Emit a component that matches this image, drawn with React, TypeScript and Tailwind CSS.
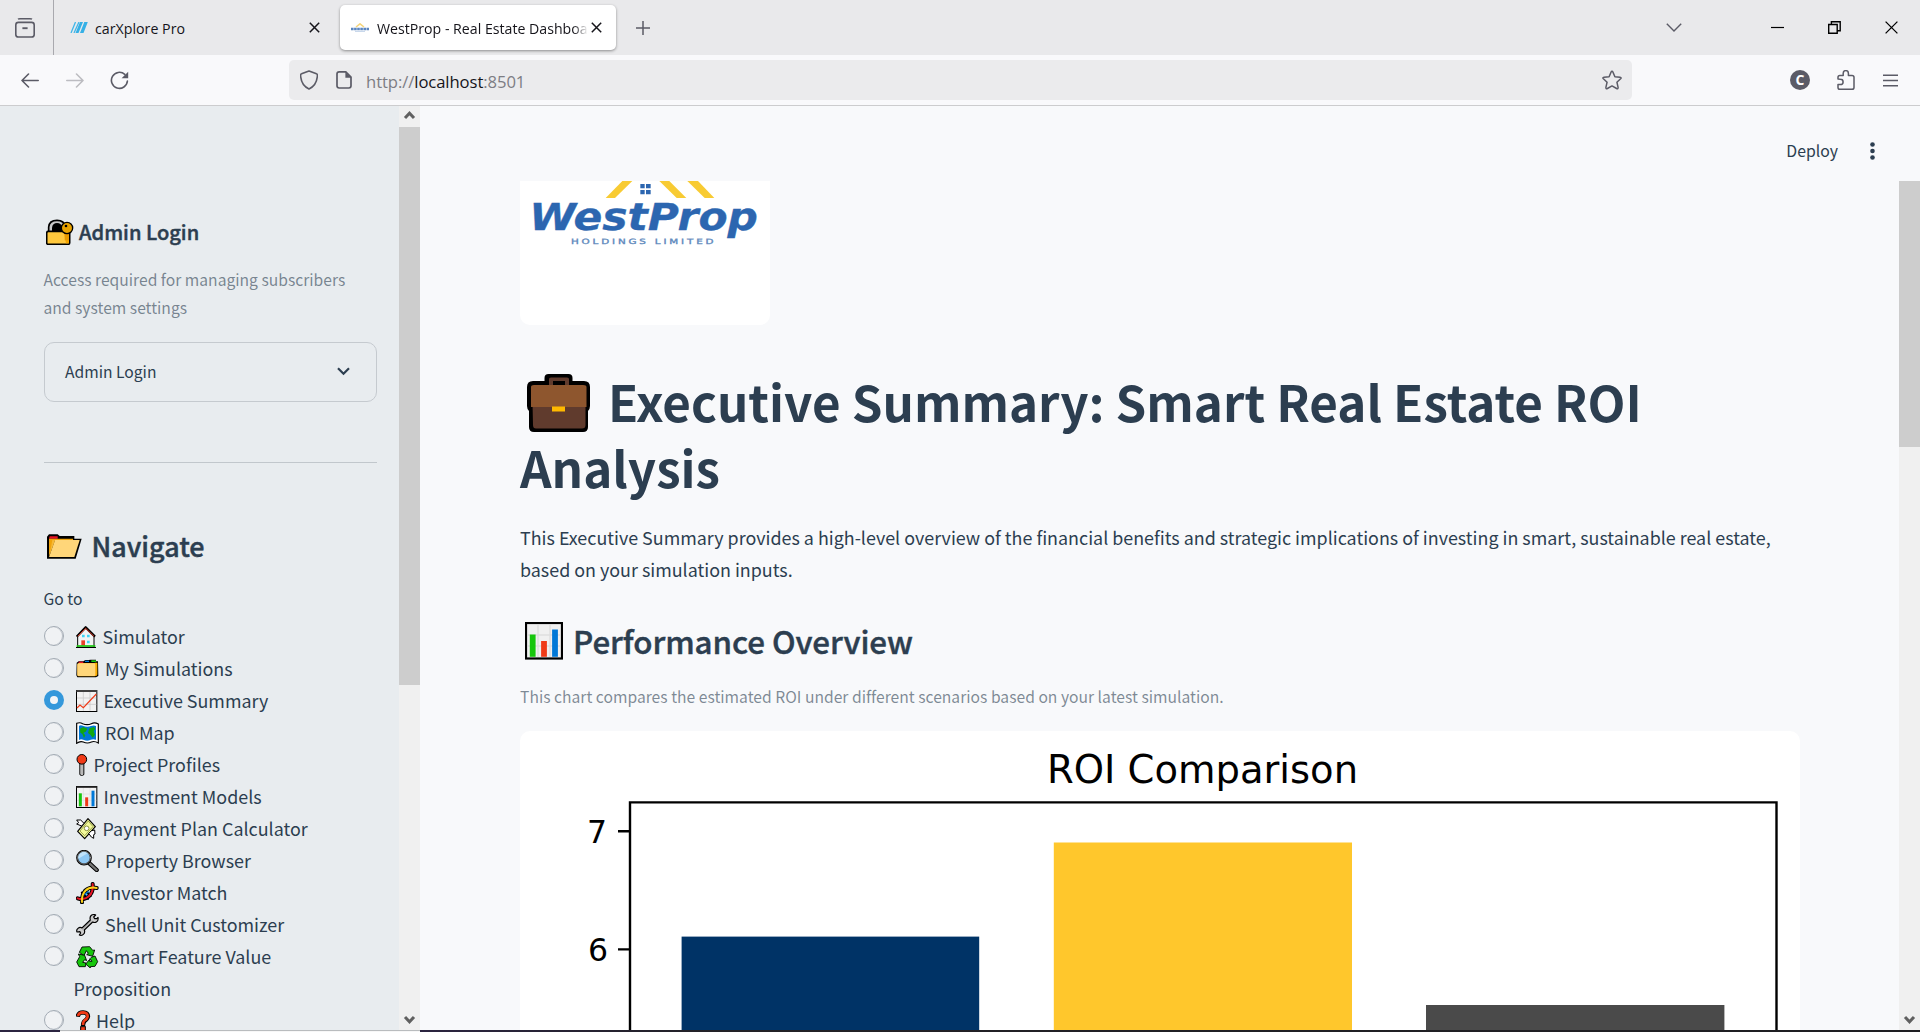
import React from "react";

const uiFont = "font-['Noto_Sans_CJK_SC',sans-serif]";
const chromeFont = "font-['Open_Sans',sans-serif]";
const semibold = "font-medium [-webkit-text-stroke:0.45px_#2c3e50]";

const icons: Record<string, React.ReactNode> = {
  house: (
    <g strokeWidth="3" strokeLinejoin="round">
      <path d="M5 64V30L29 6L54 30V64Z" fill="#f3f3f3" stroke="#000" />
      <path d="M2 32L29 4L57 32" fill="none" stroke="#000" strokeWidth="7" />
      <path d="M5 31L29 7L54 31" fill="none" stroke="#e8412a" strokeWidth="3" />
      <path d="M18 26h8v8h-8zM33 26h8v8h-8zM33 44h8v8h-8z" fill="#41d5f5" stroke="none" />
      <rect x="16" y="43" width="11" height="16" fill="#e8412a" stroke="none" />
      <path d="M2 60H58" stroke="#16c60c" strokeWidth="5" />
      <path d="M0 64.5H60" stroke="#000" strokeWidth="3" />
    </g>
  ),
  files: (
    <g>
      <path d="M2 14L8 10H22L28 6H38L44 5H60V10H66L67 54L60 58H4L1 52Z" fill="#000" />
      <path d="M56 14H64V50L60 54H56Z" fill="#ffb900" />
      <path d="M8 11h14v4H8z" fill="#e81224" />
      <path d="M27 8h12v4H27z" fill="#0078d7" />
      <path d="M46 7h14v5H46z" fill="#16c60c" />
      <path d="M4 20Q5 15 10 15H58L62 20V52Q60 55 56 55H8Q4 55 4 51Z" fill="#f7a600" />
      <path d="M4 20Q4 16 8 16L54 16Q58 16 58 20V50Q58 54 54 54H8Q4 54 4 50Z" fill="#ffd679" />
    </g>
  ),
  trend: (
    <g>
      <rect x="1.5" y="1.5" width="61" height="63" fill="#f2f2f2" stroke="#000" strokeWidth="3" />
      <path d="M1 3H63" stroke="#404040" strokeWidth="6" />
      <path d="M22 6V62M42 6V62M3 24H61M3 43H61" stroke="#ccc" strokeWidth="2.5" />
      <path d="M3 54L12 45L22 53L61 12" fill="none" stroke="#f03a17" strokeWidth="3.5" />
    </g>
  ),
  map: (
    <g>
      <path d="M2 4Q12 0 20 5Q34 11 46 5Q56 0 67 6V63Q55 56 46 60Q34 66 22 60Q12 56 2 64Z" fill="#fff" stroke="#000" strokeWidth="3.5" />
      <path d="M9 11Q15 8 22 12Q34 17 45 12Q54 9 60 12V53Q52 50 44 53Q34 59 22 53Q14 50 9 54Z" fill="#0078d7" />
      <path d="M12 20L22 15L34 20L29 29L22 33L28 40L24 48L19 36L13 32ZM40 19L54 15L58 21L53 27L57 38L50 47L43 38L36 33Z" fill="#10a810" />
    </g>
  ),
  pin: (
    <g stroke="#000" strokeWidth="3">
      <rect x="11.5" y="26" width="12" height="38" rx="4" fill="#ddd" />
      <path d="M18 30V60" stroke="#888" strokeWidth="2.5" />
      <circle cx="17.5" cy="16" r="14.5" fill="#f03a17" />
    </g>
  ),
  bars: (
    <g>
      <rect x="1.5" y="1.5" width="61" height="63" fill="#f2f2f2" stroke="#000" strokeWidth="3" />
      <path d="M1 3H63" stroke="#222" strokeWidth="5" />
      <path d="M22 6V62M42 6V62M3 24H61M3 43H61" stroke="#ddd" strokeWidth="2" />
      <path d="M13 22V61" stroke="#16c60c" strokeWidth="9" />
      <path d="M32 34V61" stroke="#f03a17" strokeWidth="9" />
      <path d="M51 14V61" stroke="#0078d7" strokeWidth="9" />
    </g>
  ),
  money: (
    <g strokeLinejoin="round">
      <path d="M36 2L58 26L26 62L5 40Z" fill="#f3fa9a" stroke="#000" strokeWidth="3.5" />
      <path d="M37 9L51 26L26 53L12 39Z" fill="none" stroke="#8a9140" strokeWidth="2.5" />
      <circle cx="32" cy="31" r="7" fill="#fff" stroke="#8a9140" strokeWidth="3" />
      <path d="M2 6H14L24 16L17 24L2 18L8 14Z" fill="#fff" stroke="#000" strokeWidth="3" />
      <path d="M56 36L57 48L53 50V61L46 57L38 46L47 38Z" fill="#fff" stroke="#000" strokeWidth="3" />
    </g>
  ),
  magnifier: (
    <g strokeLinecap="round">
      <path d="M38 38L62 60" stroke="#000" strokeWidth="13" />
      <path d="M38 38L62 60" stroke="#767676" strokeWidth="7" />
      <circle cx="24" cy="23" r="20.5" fill="#8ec8f4" stroke="#000" strokeWidth="6" />
      <circle cx="24" cy="23" r="19.5" fill="none" stroke="#aaa" strokeWidth="2" />
      <path d="M7 26A17 17 0 0 1 35 10Z" fill="#bfe2fa" />
    </g>
  ),
  dna: (
    <g fill="none" strokeLinecap="round">
      <path d="M18 32L36 50M26 24L44 42" stroke="#000" strokeWidth="7" />
      <path d="M5 49C30 58 54 38 50 6M18 61C16 30 34 12 62 18" stroke="#000" strokeWidth="12" />
      <path d="M25 32L34 43M33 25L42 34M12 52L18 55M50 12L57 17" stroke="#0078d7" strokeWidth="3" />
      <path d="M5 49C30 58 54 38 50 6" stroke="#e81224" strokeWidth="6" />
      <path d="M18 60C16 30 34 12 62 18" stroke="#fcd116" strokeWidth="6" />
      <path d="M27 38L34 31" stroke="#0078d7" strokeWidth="4" />
    </g>
  ),
  wrench: (
    <g strokeLinejoin="round">
      <path d="M47 3Q55 0 59 3L53 9L56 14L62 14L66 10Q68 20 61 24Q56 27 50 24L25 48Q28 56 22 61Q16 66 10 63L14 57L12 53L3 54Q0 48 6 43Q12 38 18 42L43 18Q40 8 47 3Z" fill="#ccc" stroke="#000" strokeWidth="3.5" />
      <path d="M20 47L47 20" stroke="#999" strokeWidth="3" />
    </g>
  ),
  recycle: (
    <g fill="#16c60c" stroke="#000" strokeWidth="2.6" strokeLinejoin="round">
      <path d="M18 3L41 2L50 13L56 12L50 31L32 26L37 22L31 14L24 29L10 19Z" />
      <path d="M7 24L26 28L32 44L26 41L20 49L30 51L28 62H9L2 48L11 32Z" />
      <path d="M46 34L57 30L65 47L57 61L43 62V66L29 54L41 40V46H48L42 38Z" />
    </g>
  ),
  question: (
    <g fill="none" strokeLinecap="butt">
      <path d="M5 20Q7 7 21 7Q36 8 36 19Q35 27 26 33Q21 37 21 48" stroke="#000" strokeWidth="13" />
      <path d="M6 18Q8 7 21 7Q35 8 35 19Q34 27 25 32Q21 36 21 45" stroke="#f03a17" strokeWidth="8" />
      <rect x="14" y="50" width="14" height="14" fill="#f03a17" stroke="#000" strokeWidth="3" />
    </g>
  ),
};

const navItems = [
  { icon: "house", width: "w-[26px]", label: "Simulator" },
  { icon: "files", width: "w-[28.5px]", label: "My Simulations" },
  { icon: "trend", width: "w-[27px]", label: "Executive Summary", selected: true },
  { icon: "map", width: "w-[28.5px]", label: "ROI Map" },
  { icon: "pin", width: "w-[17px]", label: "Project Profiles" },
  { icon: "bars", width: "w-[27px]", label: "Investment Models" },
  { icon: "money", width: "w-[26px]", label: "Payment Plan Calculator" },
  { icon: "magnifier", width: "w-[28.5px]", label: "Property Browser" },
  { icon: "dna", width: "w-[28.5px]", label: "Investor Match" },
  { icon: "wrench", width: "w-[28.5px]", label: "Shell Unit Customizer" },
  { icon: "recycle", width: "w-[26.5px]", label: "Smart Feature Value Proposition" },
  { icon: "question", width: "w-[19.5px]", label: "Help" },
];

function CloseMark() {
  return (
    <svg className="h-[11px] w-[11px] shrink-0" viewBox="0 0 11 11">
      <path d="M0.8 0.8L10.2 10.2M10.2 0.8L0.8 10.2" stroke="#15141a" strokeWidth="1.5" />
    </svg>
  );
}

function TabStrip() {
  return (
    <div className={`flex h-[55px] items-center bg-[#e9e9eb] text-[#15141a] ${chromeFont}`}>
      <div className="flex h-full w-[54px] items-center border-r border-[#a9a9ae] pl-[15px]">
        <svg className="h-5 w-5" viewBox="0 0 20 20" fill="none" stroke="#5b5b66" strokeWidth="1.6">
          <path d="M3 1.2Q3.6 0.8 5 0.8H15Q16.4 0.8 17 1.2" />
          <rect x="0.8" y="4.4" width="18.4" height="14.6" rx="2.6" />
          <path d="M7.4 10.2H12.6" strokeWidth="1.9" />
        </svg>
      </div>
      <div className="flex h-[45px] w-[286px] items-center pl-4">
        <svg className="h-[11px] w-[18px]" viewBox="0 0 18 11">
          <path d="M5.5 0L1 11M9 0L4 11" stroke="#41b6e8" strokeWidth="1.3" />
          <path d="M10 0H13L8.5 11H5.5ZM14.3 0H17.8L13.5 11H10Z" fill="#35b0e6" />
        </svg>
        <span className="ml-[7px] pt-0.5 text-[14.2px] tracking-[0.02px]">carXplore Pro</span>
        <span className="mr-[20px] ml-auto flex"><CloseMark /></span>
      </div>
      <div className="flex h-[45px] w-[276px] items-center rounded-[5px] bg-white pr-[14px] pl-[11px] shadow-[0_1px_3px_rgba(0,0,0,0.4)]">
        <svg className="h-[9px] w-[18px] shrink-0" viewBox="0 0 18 9">
          <path d="M5 4L9 0.8L13 4" fill="none" stroke="#f6d57a" strokeWidth="1.5" />
          <path d="M0 6H18" stroke="#5b86c0" strokeWidth="2.4" strokeDasharray="2.6 0.5" />
          <path d="M4 8.4H14" stroke="#a9c2df" strokeWidth="0.7" />
        </svg>
        <span className="ml-[8px] w-[211px] shrink-0 overflow-hidden pt-0.5 text-[14.15px] whitespace-nowrap [mask-image:linear-gradient(to_right,black_93%,transparent)]">
          WestProp - Real Estate Dashboa
        </span>
        <span className="ml-[3px] flex"><CloseMark /></span>
      </div>
      <svg className="ml-[20px] h-[14px] w-[14px]" viewBox="0 0 14 14">
        <path d="M7 0V14M0 7H14" stroke="#5b5b66" strokeWidth="1.5" />
      </svg>
      <div className="ml-auto flex items-center pr-[22px]">
        <svg className="mr-[89px] h-[9px] w-4" viewBox="0 0 16 9" fill="none">
          <path d="M0.8 0.8L8 8L15.2 0.8" stroke="#5b5b66" strokeWidth="1.4" />
        </svg>
        <svg className="mr-[44px] h-[13px] w-[13px]" viewBox="0 0 13 13">
          <path d="M0 6.5H13" stroke="#000" strokeWidth="1.2" />
        </svg>
        <svg className="mr-[44px] h-[13px] w-[13px]" viewBox="0 0 13 13" fill="none" stroke="#000" strokeWidth="1.4">
          <path d="M0.7 3.5H9.2V12.2H0.7ZM3.4 3.5V0.8H12.2V9.7H9.2" />
        </svg>
        <svg className="h-[13px] w-[13px]" viewBox="0 0 13 13">
          <path d="M0.6 0.6L12.4 12.4M12.4 0.6L0.6 12.4" stroke="#000" strokeWidth="1.3" />
        </svg>
      </div>
    </div>
  );
}

function Toolbar() {
  return (
    <div className={`flex h-[51px] items-center border-b border-[#ccccce] bg-[#f9f9fb] ${chromeFont}`}>
      <svg className="ml-[21px] h-[15px] w-[18px]" viewBox="0 0 18 15" fill="none" stroke="#5b5b66" strokeWidth="1.6" strokeLinecap="round" strokeLinejoin="round">
        <path d="M17.2 7.5H1M7.5 1L1 7.5L7.5 14" />
      </svg>
      <svg className="ml-[27px] h-[15px] w-[18px]" viewBox="0 0 18 15" fill="none" stroke="#bcbcc1" strokeWidth="1.6" strokeLinecap="round" strokeLinejoin="round">
        <path d="M0.8 7.5H17M10.5 1L17 7.5L10.5 14" />
      </svg>
      <svg className="ml-[26px] h-[19px] w-[19px]" viewBox="0 0 19 19" fill="none">
        <path d="M14.8 3.4A8 8 0 1 0 17.4 10" stroke="#5b5b66" strokeWidth="1.6" strokeLinecap="round" />
        <path d="M18.2 0.8V7.2H11.6Z" fill="#5b5b66" />
      </svg>
      <div className="ml-[160px] flex h-10 w-[1343px] items-center rounded-[5px] bg-[#ebebed] pr-[10px] pl-[11px]">
        <svg className="h-5 w-[18px]" viewBox="0 0 18 20" fill="none" stroke="#5b5b66" strokeWidth="1.6" strokeLinejoin="round">
          <path d="M9 1L16.5 3.8Q17.8 4.2 17.2 7.4C16.6 12.6 13.6 16.8 9 19C4.4 16.8 1.4 12.6 0.8 7.4Q0.2 4.2 1.5 3.8Z" />
        </svg>
        <svg className="ml-[18px] h-[18px] w-4" viewBox="0 0 16 18">
          <path d="M3.2 0.9H9.8L15 6.1V14.8Q15 17 12.8 17H3.2Q1 17 1 14.8V3.1Q1 0.9 3.2 0.9Z" fill="none" stroke="#5b5b66" strokeWidth="1.7" />
          <path d="M9.4 0.9L15.2 6.8H9.4Z" fill="#5b5b66" />
        </svg>
        <span className="ml-[14px] pt-[4px] text-[16.65px] tracking-[-0.08px] text-[#7d7d84]">
          http://<span className="text-[#15141a]">localhost</span>:8501
        </span>
        <svg className="ml-auto h-5 w-5" viewBox="0 0 20 20" fill="none" stroke="#5b5b66" strokeWidth="1.5" strokeLinejoin="round">
          <path d="M10 1.2Q10.6 1.2 11 2.2L12.9 6.8L18 7.2Q19.8 7.6 18.6 8.8L14.9 12.2L16.1 17.4Q16.2 19.3 14.6 18.5L10 15.9L5.4 18.5Q3.8 19.3 3.9 17.4L5.1 12.2L1.4 8.8Q0.2 7.6 2 7.2L7.1 6.8L9 2.2Q9.4 1.2 10 1.2Z" />
        </svg>
      </div>
      <div className="ml-auto flex items-center pr-[22px]">
        <div className="flex h-5 w-5 items-center justify-center rounded-full bg-[#5b5b66] text-[14px] leading-5 font-bold text-white">C</div>
        <svg className="ml-[27px] h-5 w-[18px]" viewBox="0 0 18 20" fill="none" stroke="#5b5b66" strokeWidth="1.5" strokeLinejoin="round">
          <path d="M1 9V7.2Q1 5.4 2.8 5.4H6.2V3.2A2.6 2.6 0 0 1 11.4 3.2V5.4H15Q17 5.4 17 7.2V17.4Q17 19.2 15 19.2H2.8Q1 19.2 1 17.4V14.6H3.4A2.7 2.7 0 0 0 3.4 9.2Z" />
        </svg>
        <svg className="ml-[28px] h-[13px] w-[15px]" viewBox="0 0 15 13">
          <path d="M0 1.2H15M0 6.5H15M0 11.8H15" stroke="#5b5b66" strokeWidth="1.4" />
        </svg>
      </div>
    </div>
  );
}

function ScrollArrow({ down = false }: { down?: boolean }) {
  return (
    <svg className="block h-[21px] w-[21px] shrink-0" viewBox="0 0 21 21" fill="none" stroke="#606060" strokeWidth="3">
      <path d={down ? "M6 8L10.5 12.8L15 8" : "M6 12L10.5 7.2L15 12"} />
    </svg>
  );
}

function Sidebar() {
  return (
    <aside className="flex h-full w-[420px] shrink-0 bg-[#e8ecef]">
      <div className="w-[399px] overflow-hidden pt-[111px] pr-[22px] pl-11">
        <h3 className={`flex text-[20.1px] leading-[30px] whitespace-nowrap ${semibold}`}>
          <svg className="mt-[2px] mr-[5px] ml-[2px] h-[26px] w-7 shrink-0" viewBox="0 0 84 78">
            <path d="M8 36V24Q10 4 33 4Q55 4 58 24V36" fill="#c8c8c8" stroke="#000" strokeWidth="5" />
            <path d="M18 38V26Q20 12 33 12Q46 12 50 26V38Z" fill="#000" />
            <rect x="2" y="37" width="69" height="39" rx="5" fill="#ffc83d" stroke="#000" strokeWidth="5" />
            <path d="M54 40H69V73H60Z" fill="#f7a600" />
            <path d="M56 40H69V64H56Z" fill="#e89a00" />
            <circle cx="63" cy="27" r="17" fill="#e8a200" stroke="#000" strokeWidth="4" />
            <circle cx="60" cy="21" r="4" fill="#000" />
          </svg>
          Admin Login
        </h3>
        <p className="mt-[19px] -ml-[0.5px] text-[15.65px] leading-7 whitespace-nowrap text-[#2c3e50]/60">
          Access required for managing subscribers<br />and system settings
        </p>
        <div className="mt-[20px] flex h-[60px] items-center justify-between rounded-[10px] border border-[#c5cacf] pr-[26px] pl-5 text-[15.65px] leading-6">
          <span>Admin Login</span>
          <svg className="mb-[2px] h-[9px] w-[13px]" viewBox="0 0 13 9">
            <path d="M1 1.3L6.5 6.8L12 1.3" fill="none" stroke="#2c3e50" strokeWidth="2.2" />
          </svg>
        </div>
        <div className="mt-[60px] h-px bg-[#c1c7cc]" />
        <h2 className={`mt-[65px] flex text-[26.9px] leading-9 ${semibold}`}>
          <svg className="mt-[6px] mr-[9.5px] ml-[3px] h-[26px] w-[35px] shrink-0" viewBox="0 0 105 78">
            <path d="M0 8L6 1H32L38 6H82V14H104L86 74H0Z" fill="#000" />
            <path d="M8 7H32V14H6Z" fill="#e81224" />
            <path d="M6 14H78V18H24L6 66Z" fill="#f0a30a" />
            <path d="M24 18H98L82 69H6Z" fill="#ffd679" />
            <path d="M16 18H24L7 66Z" fill="#f7b936" />
          </svg>
          Navigate
        </h2>
        <div className="mt-[25px] mb-[11px] -ml-[0.5px] text-[15.65px] leading-5">Go to</div>
        <ul className="text-[17.9px] leading-8">
          {navItems.map((item) => (
            <li key={item.label} className="flex">
              {item.selected ? (
                <span className="mt-[6px] flex h-5 w-5 shrink-0 items-center justify-center rounded-full bg-[#3498db]">
                  <span className="h-2 w-2 rounded-full bg-[#f3f5f7]" />
                </span>
              ) : (
                <span className="mt-[6px] h-5 w-5 shrink-0 rounded-full border border-[#a3abb4] bg-[#f0f2f4] shadow-[inset_-1px_0_0_#bcc2c9]" />
              )}
              <span className="ml-[9.5px] w-[290px]">
                <svg className={`mr-[0.6px] ml-[2.5px] inline-block h-[22px] align-[-4px] ${item.width}`} viewBox="0 0 90 66" preserveAspectRatio="xMinYMin slice">
                  {icons[item.icon]}
                </svg>
                {item.label === "Smart Feature Value Proposition" ? (
                  <>Smart Feature Value<br />Proposition</>
                ) : (
                  item.label
                )}
              </span>
            </li>
          ))}
        </ul>
      </div>
      <div className="flex w-[21px] flex-col bg-[#f0f0f0]">
        <ScrollArrow />
        <div className="h-[558px] bg-[#cdcdcd]" />
        <div className="mt-auto"><ScrollArrow down /></div>
      </div>
    </aside>
  );
}

function Logo() {
  return (
    <svg className="block h-36 w-[250px] rounded-b-[10px] bg-white" viewBox="0 0 750 432">
      <g fill="#f8cb33">
        <path d="M307 0H337L285 51H257Z" />
        <path d="M418 0H448L499 51H470Z" />
        <path d="M502 0H534L583 51H554Z" />
      </g>
      <path d="M361 9H374V22H361ZM378 9H392V22H378ZM361 27H374V40H361ZM378 27H392V40H378Z" fill="#2c66b0" />
      <text x="28" y="148" fontSize="113" fontWeight="bold" fontStyle="italic" fill="#2c66b0" stroke="#2c66b0" strokeWidth="1" textLength="686" lengthAdjust="spacingAndGlyphs" fontFamily="'DejaVu Sans', sans-serif">
        WestProp
      </text>
      <text x="153" y="189" fontSize="22" fill="#5f8abd" stroke="#5f8abd" strokeWidth="1" textLength="436" lengthAdjust="spacingAndGlyphs" letterSpacing="6" fontFamily="'DejaVu Sans', sans-serif">
        HOLDINGS LIMITED
      </text>
    </svg>
  );
}

function RoiChart() {
  return (
    <svg className="mt-[20px] block h-[299px] w-[1280px] rounded-t-[10px] bg-white" viewBox="520 731 1280 299">
      <rect x="681.6" y="936.6" width="297.6" height="120" fill="#003366" />
      <rect x="1053.8" y="842.5" width="298.2" height="200" fill="#ffc72c" />
      <rect x="1426" y="1005" width="298.4" height="60" fill="#4a4a4a" />
      <path d="M630 1060V802.4H1776.5V1060M618 831.3H630M618 949.4H630" fill="none" stroke="#000" strokeWidth="2.4" />
      <g fontFamily="'DejaVu Sans', sans-serif" fill="#000">
        <text x="1202.5" y="783" fontSize="38.5" textAnchor="middle">ROI Comparison</text>
        <text x="607" y="843.3" fontSize="31.5" textAnchor="end">7</text>
        <text x="608" y="961.3" fontSize="31.5" textAnchor="end">6</text>
      </g>
    </svg>
  );
}

function Main() {
  return (
    <main className="flex h-full grow flex-col bg-[#f8f9fb]">
      <header className="flex h-[75px] shrink-0 items-center justify-end pr-[45px] text-[15.8px] leading-6">
        <span className="mt-[14px]">Deploy</span>
        <svg className="mt-[15px] ml-[32px] h-[18px] w-[5px]" viewBox="0 0 5 18" fill="#2c3e50">
          <circle cx="2.5" cy="2.5" r="2.3" /><circle cx="2.5" cy="9" r="2.3" /><circle cx="2.5" cy="15.5" r="2.3" />
        </svg>
      </header>
      <div className="flex min-h-0 grow">
        <div className="w-[1479px] overflow-hidden pl-[100px]">
          <Logo />
          <h1 className="mt-[43px] text-[49.3px] leading-[66px] font-bold whitespace-nowrap">
            <span className="flex">
              <svg className="mt-[5px] mr-[17px] ml-[7px] h-[60px] w-16 shrink-0" viewBox="0 0 64 60">
                <rect x="17.5" y="1" width="28" height="16" rx="4" fill="#000" />
                <path d="M22 10V6Q22 4.5 24 4.5H40Q42 4.5 42 6V12H22Z" fill="#603b2d" />
                <rect x="26" y="9" width="12" height="5" fill="#000" />
                <path d="M0 14Q0 8 6 8H57Q63 8 63 14V33Q63 36 61 38V54Q61 59 56 59H7Q2 59 2 54V38Q0 36 0 33Z" fill="#000" />
                <path d="M26 10H38V13H26Z" fill="#000" />
                <path d="M22 8H26V13H22ZM38 8H42V13H38Z" fill="#603b2d" />
                <path d="M5.5 30H58.5V52Q58.5 55.5 55 55.5H9Q6 55.5 6 52Z" fill="#603b2d" />
                <path d="M4 14Q4 12 7 12H56Q59.5 12 59.5 14V34H4Z" fill="#8e562e" />
                <rect x="25" y="33.5" width="13" height="5" fill="#ffb900" />
              </svg>
              <span className="tracking-[-0.02px]">Executive Summary: Smart Real Estate ROI</span>
            </span>
            Analysis
          </h1>
          <p className="mt-[21px] text-[17.9px] leading-8 whitespace-nowrap">
            This Executive Summary provides a high-level overview of the financial benefits and strategic implications of investing in smart, sustainable real estate,<br />
            based on your simulation inputs.
          </p>
          <h2 className={`mt-[35px] flex text-[31.3px] leading-[42px] tracking-[-0.06px] whitespace-nowrap ${semibold}`}>
            <svg className="mt-[2px] mr-[10px] ml-[5px] h-[38px] w-[38px] shrink-0" viewBox="0 0 38 38">
              <rect x="1" y="1" width="36" height="35.5" fill="#f0f0f0" stroke="#000" strokeWidth="2.2" />
              <path d="M13 3V35M25 3V35M3 13H35M3 24H35" stroke="#dedede" strokeWidth="1.5" />
              <path d="M7.7 12.5V34.8" stroke="#16c60c" strokeWidth="5.8" />
              <path d="M19 19V34.8" stroke="#f03a17" strokeWidth="5.8" />
              <path d="M30 7.5V34.8" stroke="#0078d7" strokeWidth="5.8" />
            </svg>
            Performance Overview
          </h2>
          <p className="mt-[21px] text-[15.65px] leading-7 tracking-[0.01px] whitespace-nowrap text-[#2c3e50]/60">
            This chart compares the estimated ROI under different scenarios based on your latest simulation.
          </p>
          <RoiChart />
        </div>
        <div className="flex w-[21px] flex-col bg-[#f0f0f0]">
          <div className="h-[266px] bg-[#cdcdcd]" />
          <div className="mt-auto"><ScrollArrow down /></div>
        </div>
      </div>
    </main>
  );
}

export default function App() {
  return (
    <div className="flex h-[1032px] w-[1920px] flex-col overflow-hidden">
      <TabStrip />
      <Toolbar />
      <div className={`flex h-[924px] text-[#2c3e50] ${uiFont}`}>
        <Sidebar />
        <Main />
      </div>
      <div className="flex h-[2px]">
        <div className="w-[60px] bg-[#2b2440]" />
        <div className="w-[360px] border-t border-[#b9bcbe] bg-[#f7f7f7]" />
        <div className="grow bg-linear-to-r from-[#2b2440] from-0% via-[#222126] via-20% to-[#1e1e22]" />
      </div>
    </div>
  );
}
